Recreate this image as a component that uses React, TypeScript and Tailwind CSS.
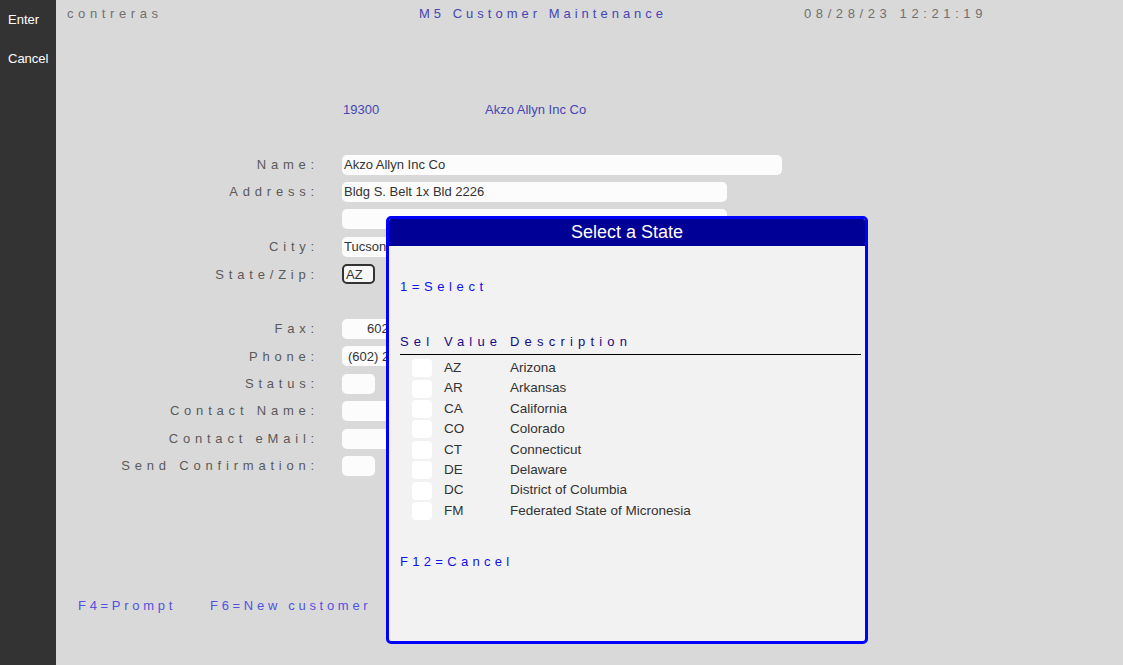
import React from "react";

const FONT = "font-['Liberation_Sans',Arial,sans-serif]";

type Field = {
  label: string;
  width: number;
  value?: string;
  pad?: string;
  focused?: boolean;
};

const FIELDS: (Field | null)[] = [
  { label: "Name:", width: 440, value: "Akzo Allyn Inc Co" },
  { label: "Address:", width: 385, value: "Bldg S. Belt 1x Bld 2226" },
  { label: "", width: 385 },
  { label: "City:", width: 385, value: "Tucson" },
  { label: "State/Zip:", width: 33, value: "AZ", focused: true },
  null,
  { label: "Fax:", width: 120, value: "602 555-0190", pad: "pl-[25px]" },
  { label: "Phone:", width: 120, value: "(602) 225-1100", pad: "pl-[6px]" },
  { label: "Status:", width: 33 },
  { label: "Contact Name:", width: 385 },
  { label: "Contact eMail:", width: 385 },
  { label: "Send Confirmation:", width: 33 },
];

const STATES = [
  ["AZ", "Arizona"],
  ["AR", "Arkansas"],
  ["CA", "California"],
  ["CO", "Colorado"],
  ["CT", "Connecticut"],
  ["DE", "Delaware"],
  ["DC", "District of Columbia"],
  ["FM", "Federated State of Micronesia"],
];

function StatePrompt() {
  return (
    <div className="absolute left-[386px] top-[216px] flex h-[428px] w-[482px] flex-col overflow-hidden rounded-[5px] border-[3px] border-[#0000ff] bg-[#f2f2f2]">
      <div className="flex h-[27px] items-center justify-center bg-[#000096] text-[18px] text-white">
        Select a State
      </div>
      <div className="flex flex-col pl-[11px] pr-[4px] pt-[33px]">
        <div className="text-[13px] leading-[16px] tracking-[4.6px] text-[#1010f0]">1=Select</div>
        <div className="mt-[39px] flex h-[16px] items-center text-[13px] tracking-[5.2px] text-[#1a0a86]">
          <span className="w-[44px]">Sel</span>
          <span className="w-[66px]">Value</span>
          <span>Description</span>
        </div>
        <div className="mt-[4px] border-t border-black" />
        <div className="flex flex-col pt-[3px]">
          {STATES.map(([code, name]) => (
            <div key={code} className="flex h-[20.4px] items-center text-[13.5px] text-[#333]">
              <span className="ml-[12px] h-[18px] w-[20px] rounded-[4px] bg-white" />
              <span className="ml-[12px] w-[66px]">{code}</span>
              <span>{name}</span>
            </div>
          ))}
        </div>
        <div className="mt-[33px] text-[13px] leading-[16px] tracking-[4.3px] text-[#1010f0]">F12=Cancel</div>
      </div>
    </div>
  );
}

export default function App() {
  return (
    <div className={`relative flex h-[665px] w-[1123px] overflow-hidden ${FONT}`}>
      <div className="flex w-[56px] shrink-0 flex-col bg-[#333333] pl-[8px] pt-[12px] text-[13px] leading-[16px] text-white">
        <span>Enter</span>
        <span className="mt-[23px]">Cancel</span>
      </div>

      <div className="flex flex-1 flex-col bg-[#d9d9d9]">
        <div className="flex pl-[11px] pt-[6px] text-[13px] leading-[16px] tracking-[4.6px]">
          <span className="w-[352px] text-[#707070]">contreras</span>
          <span className="w-[385px] tracking-[4px] text-[#4646b4]">M5 Customer Maintenance</span>
          <span className="text-[#707070]">08/28/23 12:21:19</span>
        </div>

        <div className="mt-[80px] flex pl-[287px] text-[13px] leading-[16px] text-[#4646b4]">
          <span className="w-[142px]">19300</span>
          <span>Akzo Allyn Inc Co</span>
        </div>

        <div className="mt-[33px] flex flex-col">
          {FIELDS.map((f, i) =>
            f === null ? (
              <div key={i} className="h-[27.4px]" />
            ) : (
              <div key={i} className="flex h-[27.4px] items-center">
                <span className="w-[263px] text-right text-[13px] tracking-[4.8px] text-[#5a5a5a]">
                  {f.label}
                </span>
                <div
                  className={`ml-[23px] flex h-[20px] items-center overflow-hidden whitespace-nowrap rounded-[5px] text-[13px] text-[#333] ${
                    f.focused ? "border-2 border-[#333] bg-[#f7f7f7] pl-[1px]" : "bg-[#fcfcfc]"
                  } ${f.pad ?? "pl-[2px]"}`}
                  style={{ width: f.width }}
                >
                  {f.value}
                </div>
              </div>
            )
          )}
        </div>

        <div className="mt-[118px] flex pl-[22px] text-[13px] leading-[16px] tracking-[3.7px] text-[#5252e0]">
          <span className="w-[132px]">F4=Prompt</span>
          <span>F6=New customer</span>
        </div>
      </div>

      <StatePrompt />
    </div>
  );
}
